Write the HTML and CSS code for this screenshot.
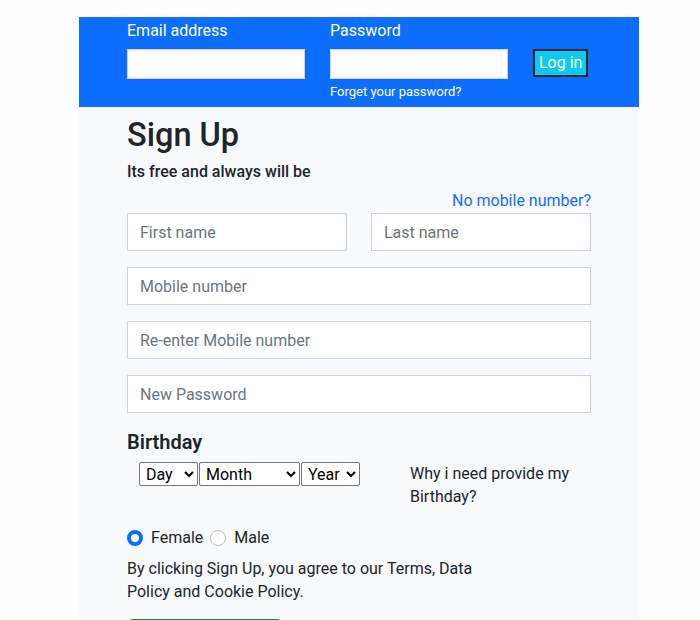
FILE: index.html
```html
<!DOCTYPE html>
<html lang="en">
<head>
<meta charset="utf-8">
<title>Sign Up</title>
<link rel="stylesheet" href="styles.css">
</head>
<body>
<div class="page">
  <header class="topbar">
    <div class="login-field">
      <label class="login-label" for="email">Email address</label>
      <input class="login-input" id="email" type="email">
    </div>
    <div class="login-field">
      <label class="login-label" for="pass">Password</label>
      <input class="login-input" id="pass" type="password">
      <a class="forgot" href="#">Forget your password?</a>
    </div>
    <button class="login-btn" type="button">Log in</button>
  </header>

  <main class="signup">
    <h1 class="title">Sign Up</h1>
    <p class="subtitle">Its free and always will be</p>
    <div class="nomobile"><a href="#">No mobile number?</a></div>

    <div class="name-row">
      <input class="field" type="text" placeholder="First name">
      <input class="field" type="text" placeholder="Last name">
    </div>
    <input class="field" type="text" placeholder="Mobile number">
    <input class="field" type="text" placeholder="Re-enter Mobile number">
    <input class="field" type="password" placeholder="New Password">

    <h2 class="bday-title">Birthday</h2>
    <div class="bday-row">
      <div class="selects">
        <select class="sel sel-day"><option>Day</option></select>
        <select class="sel sel-month"><option>Month</option></select>
        <select class="sel sel-year"><option>Year</option></select>
      </div>
      <p class="why">Why i need provide my Birthday?</p>
    </div>

    <div class="gender">
      <label class="radio"><input type="radio" name="g" checked><span>Female</span></label>
      <label class="radio"><input type="radio" name="g"><span>Male</span></label>
    </div>

    <p class="terms">By clicking Sign Up, you agree to our Terms, Data Policy and Cookie Policy.</p>

    <button class="signup-btn" type="button">Sign Up</button>
  </main>
</div>
</body>
</html>
```

FILE: styles.css
```css
* { box-sizing: border-box; }

html, body {
  margin: 0;
  padding: 0;
  background: #fdfdfd;
  font-family: Roboto, "Liberation Sans", sans-serif;
  font-size: 16px;
  line-height: 1.5;
  color: #212529;
  overflow: hidden;
}

.page {
  width: 560px;
  margin: 17px 0 0 79px;
  background: #f8f9fa;
  min-height: 700px;
}

/* top bar */
.topbar {
  background: #0d6efd;
  height: 90px;
  padding: 2px 48px 0;
  display: flex;
  gap: 25px;
  align-items: flex-start;
}

.login-field {
  display: flex;
  flex-direction: column;
  width: 178px;
}

.login-label {
  color: #fff;
  line-height: 24px;
  margin-bottom: 6px;
}

.login-input {
  width: 178px;
  height: 30px;
  border: 1px solid #ced4da;
  background: #fff;
  padding: 2px 6px;
  font: inherit;
}

.forgot {
  color: #fff;
  text-decoration: none;
  font-size: 13px;
  line-height: 21px;
  margin-top: 2px;
}

.login-btn {
  margin-top: 30px;
  height: 28px;
  padding: 0 4px;
  background: #0dcaf0;
  border: 2px solid #212529;
  color: #fff;
  font: inherit;
  line-height: 24px;
}

/* sign up */
.signup {
  padding: 9px 48px 0;
  display: flex;
  flex-direction: column;
}

.title {
  margin: 0 0 5px;
  font-size: 32.5px;
  font-weight: 500;
  line-height: 1.2;
}

.subtitle {
  margin: 0 0 5px;
  font-weight: 500;
  line-height: 24px;
}

.nomobile {
  text-align: right;
  line-height: 24px;
}

.nomobile a {
  color: #0d6efd;
  text-decoration: none;
}

.name-row {
  display: grid;
  grid-template-columns: 1fr 1fr;
  gap: 24px;
}

.field {
  display: block;
  width: 100%;
  height: 38px;
  margin-bottom: 16px;
  padding: 6px 12px;
  border: 1px solid #ced4da;
  border-radius: 0;
  background: #fff;
  font: inherit;
  color: #212529;
}

.field::placeholder { color: #6c757d; }

.bday-title {
  margin: 1px 0 8px;
  font-size: 20px;
  font-weight: 600;
  line-height: 24px;
}

.bday-row {
  display: grid;
  grid-template-columns: 283px 1fr;
  margin-bottom: 18px;
}

.selects {
  display: flex;
  padding-left: 12px;
  align-items: flex-start;
}

.sel {
  height: 24px;
  font-family: inherit;
  font-size: 16px;
  color: #000;
  border: 1px solid #767676;
  border-radius: 2px;
  background: #fff;
  margin: 0 1px 0 0;
  padding: 0 0 0 2px;
}

.sel-day { width: 59px; }
.sel-month { width: 101px; }
.sel-year { width: 59px; }

.why {
  margin: 0;
  line-height: 23px;
  padding-right: 10px;
}

.gender {
  display: flex;
  gap: 7px;
  line-height: 24px;
  margin-bottom: 7px;
}

.radio {
  display: flex;
  align-items: center;
  gap: 8px;
}

.radio input {
  appearance: none;
  margin: 0;
  width: 16px;
  height: 16px;
  border: 1px solid #bfbfbf;
  border-radius: 50%;
  background: #fff;
}

.radio input:checked {
  border: 4px solid #0d6efd;
  background: #fff;
}

.terms {
  margin: 0 0 16px;
  width: 370px;
  line-height: 23px;
}

.signup-btn {
  align-self: flex-start;
  width: 156px;
  height: 38px;
  background: #198754;
  border: 1px solid #198754;
  border-radius: 6px;
  color: #fff;
  font: inherit;
}
```
